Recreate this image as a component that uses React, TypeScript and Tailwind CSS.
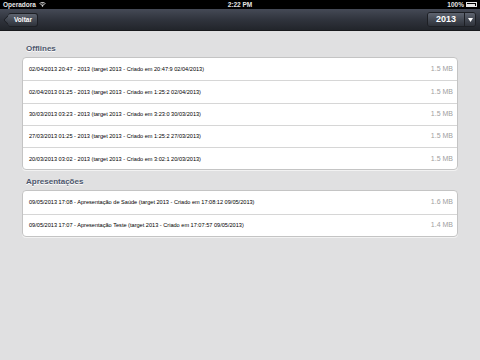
import React from 'react';

const offlines = [
  { label: '02/04/2013 20:47 - 2013 (target 2013 - Criado em 20:47:9 02/04/2013)', size: '1.5 MB' },
  { label: '02/04/2013 01:25 - 2013 (target 2013 - Criado em 1:25:2 02/04/2013)', size: '1.5 MB' },
  { label: '30/03/2013 03:23 - 2013 (target 2013 - Criado em 3:23:0 30/03/2013)', size: '1.5 MB' },
  { label: '27/03/2013 01:25 - 2013 (target 2013 - Criado em 1:25:2 27/03/2013)', size: '1.5 MB' },
  { label: '20/03/2013 03:02 - 2013 (target 2013 - Criado em 3:02:1 20/03/2013)', size: '1.5 MB' },
];

const apresentacoes = [
  { label: '09/05/2013 17:08 - Apresentação de Saúde (target 2013 - Criado em 17:08:12 09/05/2013)', size: '1.6 MB' },
  { label: '09/05/2013 17:07 - Apresentação Teste (target 2013 - Criado em 17:07:57 09/05/2013)', size: '1.4 MB' },
];

function Section({ title, rows }: { title: string; rows: { label: string; size: string }[] }) {
  return (
    <div>
      <p className="px-[26px] h-[20px] flex items-center pt-[4px] text-[8px] font-bold text-[#4c566c] [text-shadow:0_1px_0_#fff]">
        {title}
      </p>
      <div className="mx-[22px] bg-white rounded-[4px] border border-[#c4c4c4] overflow-hidden shadow-[0_1px_0_#f2f2f2]">
        {rows.map((r, i) => (
          <div
            key={i}
            className={`h-[22.3px] flex items-center justify-between pl-[6px] pr-[4px] ${i > 0 ? 'border-t border-[#d6d6d6]' : ''}`}
          >
            <span className="text-[5.6px] text-black">{r.label}</span>
            <span className="text-[7px] text-[#a0a0a0]">{r.size}</span>
          </div>
        ))}
      </div>
    </div>
  );
}

export default function App() {
  return (
    <div className="w-[480px] h-[360px] overflow-hidden bg-[#e0e0e1] font-['Liberation_Sans',Arial,sans-serif] flex flex-col">
      {/* status bar */}
      <div className="h-[9px] bg-black text-[#e6e6e6] text-[6.5px] font-bold flex items-center justify-between px-[3px]">
        <div className="flex items-center gap-[3px] w-[60px]">
          <span>Operadora</span>
          <svg width="7" height="5" viewBox="0 0 14 10" fill="#e6e6e6">
            <path d="M7 10 L4.5 7 A4 4 0 0 1 9.5 7 Z" />
            <path d="M2.5 5 A6.5 6.5 0 0 1 11.5 5 L10.5 6.2 A5 5 0 0 0 3.5 6.2 Z" />
            <path d="M0.5 3 A9.5 9.5 0 0 1 13.5 3 L12.5 4.2 A8 8 0 0 0 1.5 4.2 Z" />
          </svg>
        </div>
        <span>2:22 PM</span>
        <div className="flex items-center gap-[2px] w-[60px] justify-end">
          <span>100%</span>
          <div className="w-[11px] h-[5px] border border-[#e6e6e6] p-[0.5px] flex">
            <div className="flex-1 bg-[#e6e6e6]" />
          </div>
        </div>
      </div>

      {/* nav bar */}
      <div className="h-[22px] bg-gradient-to-b from-[#454a56] via-[#30343d] to-[#22252b] border-b border-[#18191c] flex items-center justify-between pl-[5px] pr-[4px]">
        <div className="relative h-[14px] ml-[3px] flex items-center">
          <div className="absolute left-[-3px] top-[2px] w-[10px] h-[10px] rotate-45 rounded-[2px] bg-gradient-to-br from-[#5a606c] to-[#2c3038] border-l border-b border-[#1d1f24]" />
          <div className="relative h-[14px] pl-[6px] pr-[5px] rounded-[3px] bg-gradient-to-b from-[#5e6470] to-[#2e323a] border border-[#1d1f24] border-l-0 flex items-center text-[6.5px] font-bold text-white">
            Voltar
          </div>
        </div>
        <div className="flex h-[15px] rounded-[3px] border border-[#1d1f24] overflow-hidden">
          <div className="w-[36px] bg-gradient-to-b from-[#5e6470] to-[#2e323a] flex items-center justify-center text-[9px] font-bold text-white">
            2013
          </div>
          <div className="w-[11px] border-l border-[#1d1f24] bg-gradient-to-b from-[#5e6470] to-[#2e323a] flex items-center justify-center">
            <svg width="5" height="4" viewBox="0 0 10 8" fill="#fff">
              <path d="M0 0 H10 L5 8 Z" />
            </svg>
          </div>
        </div>
      </div>

      <div className="pt-[6px] flex flex-col">
        <Section title="Offlines" rows={offlines} />
        <Section title="Apresentações" rows={apresentacoes} />
      </div>
    </div>
  );
}
